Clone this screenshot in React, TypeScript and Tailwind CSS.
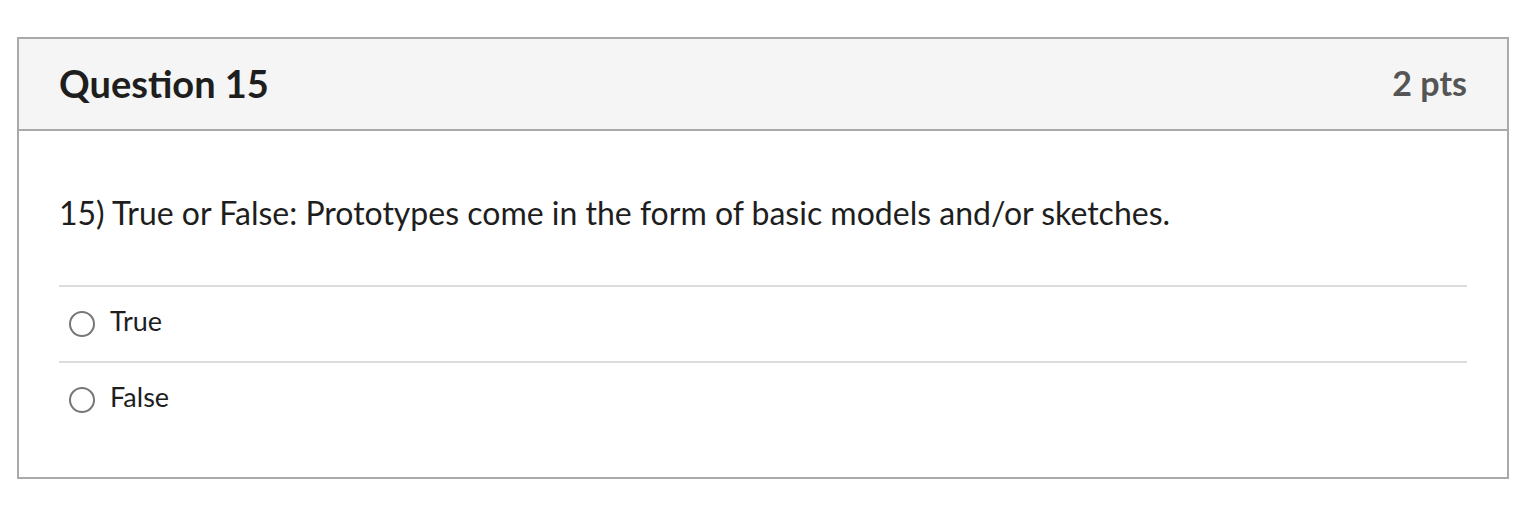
import React from "react";

const answers = ["True", "False"];

export default function App() {
	return (
		<div className="bg-white w-[1528px] h-[507px] pt-[37px] pl-[17px] font-['Lato','Liberation_Sans',sans-serif] text-[#1e1e1e]">
			<div className="w-[1492px] h-[442px] border-2 border-[#a9a9a9]">
				<div className="h-[92px] flex items-center justify-between px-10 bg-[#f5f5f5] border-b-2 border-[#a9a9a9]">
					<h2 className="text-[38px] font-bold leading-none -mt-[2px]">Question 15</h2>
					<span className="text-[34px] font-bold leading-none text-[#555] -mt-[2px]">2 pts</span>
				</div>
				<div className="px-10">
					<p className="pt-[58px] pb-[48px] text-[32px] leading-[48px]">
						15) True or False: Prototypes come in the form of basic models and/or sketches.
					</p>
					<div className="flex flex-col">
						{answers.map((answer) => (
							<label
								key={answer}
								className="h-[76px] flex items-center border-t-2 border-[#dcdcdc] text-[27px]"
							>
								<span className="ml-[10px] w-[26px] h-[26px] rounded-full border-2 border-[#777] bg-white" />
								<span className="ml-[15px] -mt-[5px]">{answer}</span>
							</label>
						))}
					</div>
				</div>
			</div>
		</div>
	);
}
